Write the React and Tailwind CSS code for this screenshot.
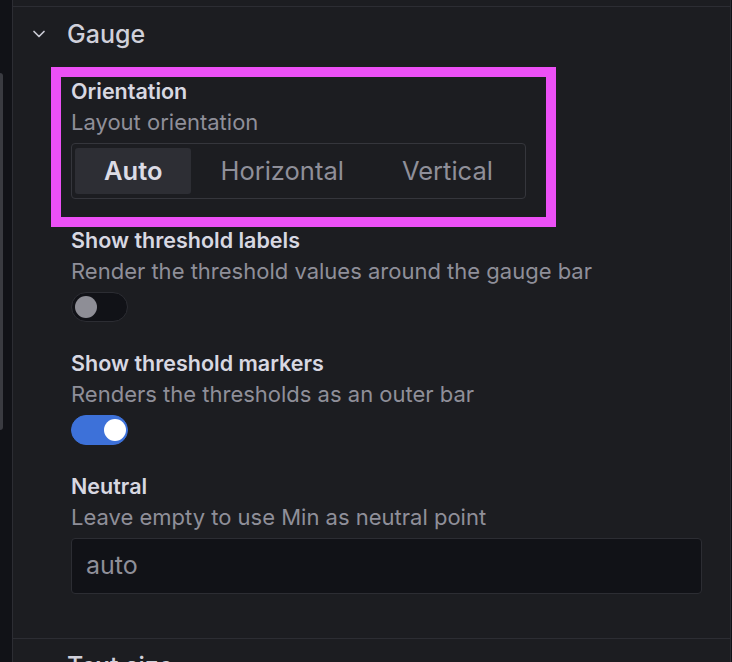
import React from 'react';

const font = { fontFamily: 'Inter, "Noto Sans", sans-serif' };

const Chevron = () => (
  <svg width="16" height="16" viewBox="0 0 16 16" fill="none" className="shrink-0">
    <path d="M3 5.5l5 5 5-5" stroke="#c9c9d3" strokeWidth="1.7" strokeLinecap="round" strokeLinejoin="round" />
  </svg>
);

const Toggle = ({ on }) => (
  <div
    className={`w-[57px] h-[30px] rounded-full flex items-center border ${
      on ? 'bg-[#3d71d9] border-[#3d71d9] pl-[32px]' : 'bg-[#111217] border-[#2c2d33] pl-[3px]'
    }`}
  >
    <div className={`w-[22px] h-[22px] rounded-full ${on ? 'bg-white' : 'bg-[#8e8e96]'}`} />
  </div>
);

const Field = ({ label, description, children }) => (
  <div>
    <div className="text-[21.5px] leading-[30px] font-semibold text-[#d8d8e2]">{label}</div>
    <div className="mt-[1px] text-[22px] leading-[30px] text-[#8f8f99]">{description}</div>
    <div className="mt-[6px]">{children}</div>
  </div>
);

const SectionHeader = ({ title }) => (
  <div className="flex items-center h-[32px] pl-[18px]">
    <Chevron />
    <span className="ml-[20px] text-[25px] leading-[32px] font-medium text-[#d0d0da]">{title}</span>
  </div>
);

const options = ['Auto', 'Horizontal', 'Vertical'];

export default function App() {
  return (
    <div style={font} className="w-[732px] h-[662px] overflow-hidden flex bg-[#111217]">
      {/* left pane edge with scrollbar thumb */}
      <div className="w-[12px] shrink-0 pt-[73px]">
        <div className="w-[3px] h-[357px] rounded-r-sm bg-[#3a3b41]" />
      </div>

      <div className="relative w-[719px] shrink-0 bg-[#1c1d21] border-l border-r border-[#2c2d33] pt-[6px]">
        <div className="border-t border-[#2c2d33] pt-[11px] pb-[44px]">
          <SectionHeader title="Gauge" />

          <div className="pl-[58px] pr-[28px] mt-[26px] flex flex-col gap-[26px]">
            <Field label="Orientation" description="Layout orientation">
              <div className="inline-flex border border-[#35363c] rounded-[4px] px-[3px] py-[4px]">
                {options.map((o, i) => (
                  <div
                    key={o}
                    className={`h-[46px] px-[29px] flex items-center rounded-[3px] text-[25.5px] ${
                      i === 0 ? 'bg-[#2d2e34] text-[#dcdce6] font-semibold' : 'text-[#8f8f99]'
                    }`}
                  >
                    {o}
                  </div>
                ))}
              </div>
            </Field>

            <Field label="Show threshold labels" description="Render the threshold values around the gauge bar">
              <Toggle on={false} />
            </Field>

            <Field label="Show threshold markers" description="Renders the thresholds as an outer bar">
              <Toggle on={true} />
            </Field>

            <Field label="Neutral" description="Leave empty to use Min as neutral point">
              <div className="h-[56px] w-full bg-[#111217] border border-[#2c2d33] rounded-[4px] flex items-center px-[14px] text-[25px] text-[#8f8f99]">
                auto
              </div>
            </Field>
          </div>
        </div>

        <div className="border-t border-[#2c2d33] pt-[11px]">
          <SectionHeader title="Text size" />
        </div>

        {/* highlight frame drawn over the orientation option */}
        <div className="absolute left-[38px] top-[67px] w-[505px] h-[160px] border-[10px] border-[#ec50f6]" />
      </div>

      <div className="flex-1 bg-[#111217]" />
    </div>
  );
}
